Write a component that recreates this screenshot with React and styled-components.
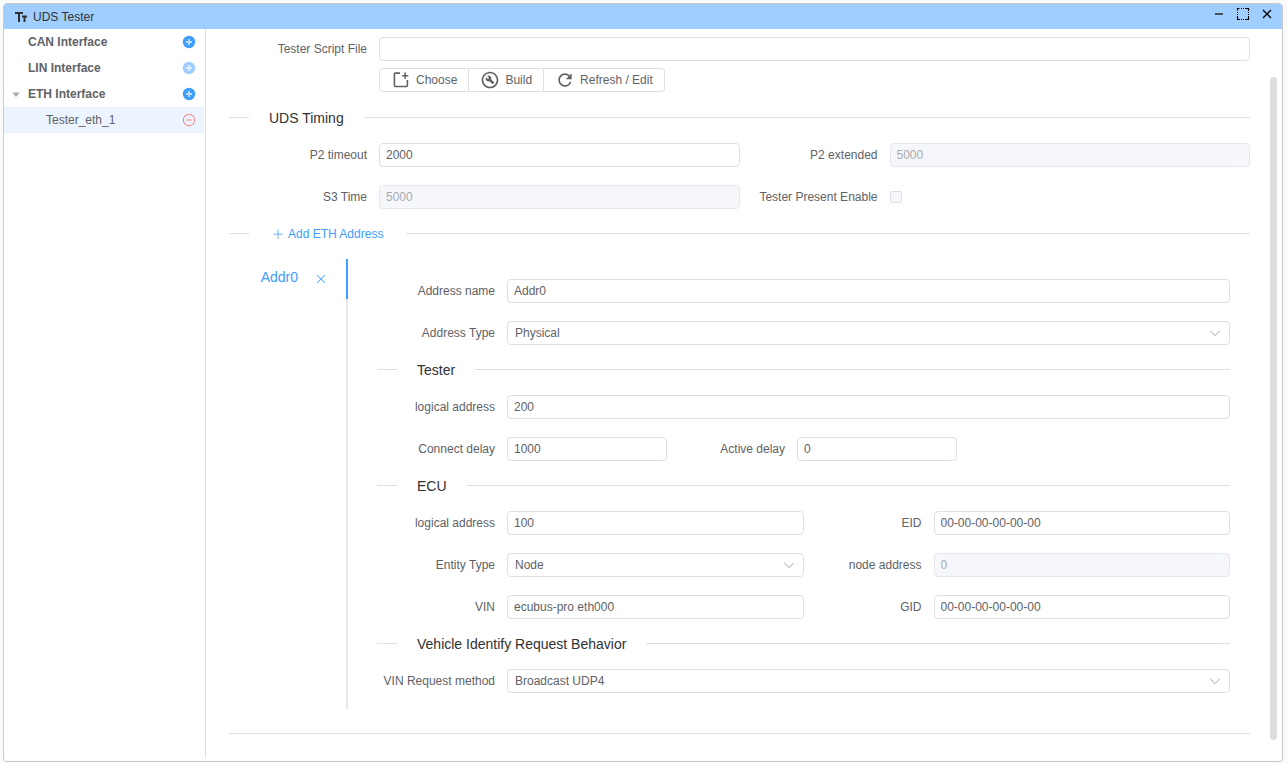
import { useState } from 'react'
import styled, { createGlobalStyle } from 'styled-components'
import { MdOutlineBuildCircle, MdRefresh } from 'react-icons/md'

const line_color = '#dcdfe6'
const text_color = '#606266'
const primary_color = '#409eff'

const ETH_TREE = [
    { name: 'CAN Interface', canAdd: true },
    { name: 'LIN Interface', canAdd: false },
    { name: 'ETH Interface', canAdd: true, children: ['Tester_eth_1'] },
]

//------------------Icons------------------

const TextSize = () => (
    <svg width="14" height="14" viewBox="0 0 14 14" fill="none" stroke="currentColor" strokeWidth="2" aria-hidden="true">
        <path d="M1 3h8M5 3v9M8 6.5h5M10.5 6.5V12" />
    </svg>
)

const PlusCircle = () => (
    <svg width="14" height="14" viewBox="0 0 14 14" aria-hidden="true">
        <circle cx="7" cy="7" r="6.2" fill="currentColor" />
        <path d="M7 4v6M4 7h6" stroke="#fff" strokeOpacity="0.65" strokeWidth="1.8" />
    </svg>
)

const MinusCircle = () => (
    <svg width="14" height="14" viewBox="0 0 1024 1024" fill="currentColor" aria-hidden="true">
        <path d="M352 480h320a32 32 0 1 1 0 64H352a32 32 0 0 1 0-64z" />
        <path d="M512 896a384 384 0 1 0 0-768 384 384 0 0 0 0 768zm0 64a448 448 0 1 1 0-896 448 448 0 0 1 0 896z" />
    </svg>
)

const Caret = () => (
    <svg width="12" height="12" viewBox="0 0 1024 1024" fill="#a8abb2" aria-hidden="true">
        <path d="M192 384h640L512 768z" />
    </svg>
)

const Plus = () => (
    <svg width="12" height="12" viewBox="0 0 1024 1024" fill="currentColor" aria-hidden="true">
        <path d="M480 480V128a32 32 0 0 1 64 0v352h352a32 32 0 1 1 0 64H544v352a32 32 0 1 1-64 0V544H128a32 32 0 0 1 0-64z" />
    </svg>
)

const Cross = () => (
    <svg width="14" height="14" viewBox="0 0 1024 1024" fill="currentColor" aria-hidden="true">
        <path d="M764.288 214.592 512 466.88 259.712 214.592a31.936 31.936 0 0 0-45.12 45.12L466.752 512 214.528 764.224a31.936 31.936 0 1 0 45.12 45.184L512 557.184l252.288 252.288a31.936 31.936 0 0 0 45.12-45.12L557.12 512.064l252.288-252.352a31.936 31.936 0 1 0-45.12-45.184z" />
    </svg>
)

const ChevronDown = () => (
    <svg width="14" height="14" viewBox="0 0 1024 1024" fill="#a8abb2" aria-hidden="true">
        <path d="M831.872 340.864 512 652.672 192.128 340.864a30.592 30.592 0 0 0-42.752 0 29.12 29.12 0 0 0 0 41.6L489.664 714.24a32 32 0 0 0 44.672 0l340.288-331.712a29.12 29.12 0 0 0 0-41.728 30.592 30.592 0 0 0-42.752 0z" />
    </svg>
)

const NewFile = () => (
    <svg width="20" height="20" viewBox="-1 -1 20 20" fill="none" stroke="currentColor" strokeWidth="1.6" aria-hidden="true">
        <path d="M8 2.1H3.4a1 1 0 0 0-1 1v11.4a1 1 0 0 0 1 1h11a1 1 0 0 0 1-1V9M13.2 1.6v6.2M10.1 4.7h6.2" />
    </svg>
)

const Minimize = () => (
    <svg width="14" height="14" viewBox="0 0 14 14" aria-hidden="true">
        <path d="M3 7h8" stroke="#303133" strokeOpacity="0.8" strokeWidth="2" />
    </svg>
)

const Maximize = () => (
    <svg width="14" height="14" viewBox="0 0 14 14" fill="none" stroke="currentColor" aria-hidden="true">
        <path d="M1.5 3.5v-2h2M10 1.5h2.5V4M12.5 10v2.5H10M4 12.5H1.5V10" strokeWidth="1.2" />
        <path d="M5 1.5h5M5 12.5h5M1.5 5v5M12.5 5v5" strokeDasharray="1 1" />
    </svg>
)

const CloseWindow = () => (
    <svg width="14" height="14" viewBox="0 0 14 14" aria-hidden="true">
        <path d="M3 3l8 8M11 3l-8 8" stroke="currentColor" strokeWidth="1.3" />
    </svg>
)

//------------------Form parts------------------

function TextField({ id, label, value = '', disabled, width, labelWidth }) {
    const [text, setText] = useState(value)
    return (
        <Field>
            <Label htmlFor={id} $width={labelWidth}>{label}</Label>
            <TextInput
                id={id}
                type="text"
                value={text}
                disabled={disabled}
                $width={width}
                onChange={(e) => setText(e.target.value)}
            />
        </Field>
    )
}

function SelectField({ id, label, options }) {
    const [selected, setSelected] = useState(options[0])
    return (
        <Field>
            <Label htmlFor={id}>{label}</Label>
            <SelectBox>
                <Select id={id} value={selected} onChange={(e) => setSelected(e.target.value)}>
                    {options.map((option) => <option key={option}>{option}</option>)}
                </Select>
                <ChevronDown />
            </SelectBox>
        </Field>
    )
}

function Divider({ title, children }) {
    return (
        <DividerRow>
            {title && <DividerTitle>{title}</DividerTitle>}
            {children}
        </DividerRow>
    )
}

function Sidebar() {
    const [selected, setSelected] = useState('Tester_eth_1')
    return (
        <SidebarPanel>
            {ETH_TREE.map(({ name, canAdd, children = [] }) => (
                <div key={name}>
                    <TreeRow>
                        <CaretSlot>{children.length > 0 && <Caret />}</CaretSlot>
                        <GroupName>{name}</GroupName>
                        <IconButton aria-label={`Add to ${name}`} disabled={!canAdd}><PlusCircle /></IconButton>
                    </TreeRow>
                    {children.map((child) => (
                        <TreeRow key={child} $active={child === selected} onClick={() => setSelected(child)}>
                            <ChildName>{child}</ChildName>
                            <IconButton $danger aria-label={`Remove ${child}`}><MinusCircle /></IconButton>
                        </TreeRow>
                    ))}
                </div>
            ))}
        </SidebarPanel>
    )
}

function AddressForm() {
    return (
        <AddressPanel>
            <Rows>
                <TextField id="addr-name" label="Address name" value="Addr0" />
                <SelectField id="addr-type" label="Address Type" options={['Physical', 'Functional']} />
            </Rows>
            <Divider title="Tester" />
            <Rows>
                <TextField id="tester-logical" label="logical address" value="200" />
                <InlineFields>
                    <TextField id="connect-delay" label="Connect delay" value="1000" width="160px" />
                    <TextField id="active-delay" label="Active delay" value="0" width="160px" />
                </InlineFields>
            </Rows>
            <Divider title="ECU" />
            <TwoColumns>
                <TextField id="ecu-logical" label="logical address" value="100" />
                <TextField id="eid" label="EID" value="00-00-00-00-00-00" />
                <SelectField id="entity-type" label="Entity Type" options={['Node', 'Gateway']} />
                <TextField id="node-address" label="node address" value="0" disabled />
                <TextField id="vin" label="VIN" value="ecubus-pro eth000" />
                <TextField id="gid" label="GID" value="00-00-00-00-00-00" />
            </TwoColumns>
            <Divider title="Vehicle Identify Request Behavior" />
            <SelectField id="vin-method" label="VIN Request method" options={['Broadcast UDP4', 'Unicast']} />
        </AddressPanel>
    )
}

export default function App() {
    return (
        <Page>
            <GlobalStyle />
            <Window>
                <TitleBar>
                    <TextSize />
                    <Title>UDS Tester</Title>
                    <WindowButton aria-label="Minimize"><Minimize /></WindowButton>
                    <WindowButton aria-label="Maximize"><Maximize /></WindowButton>
                    <WindowButton aria-label="Close"><CloseWindow /></WindowButton>
                </TitleBar>
                <Body>
                    <Sidebar />
                    <Main>
                        <ScriptBlock>
                            <TextField id="script" label="Tester Script File" labelWidth="150px" />
                            <ButtonGroup>
                                <ToolButton><NewFile />Choose</ToolButton>
                                <ToolButton><MdOutlineBuildCircle size={20} />Build</ToolButton>
                                <ToolButton><MdRefresh size={20} />Refresh / Edit</ToolButton>
                            </ButtonGroup>
                        </ScriptBlock>
                        <Divider title="UDS Timing" />
                        <TwoColumns>
                            <TextField id="p2" label="P2 timeout" value="2000" labelWidth="150px" />
                            <TextField id="p2-ext" label="P2 extended" value="5000" labelWidth="150px" disabled />
                            <TextField id="s3" label="S3 Time" value="5000" labelWidth="150px" disabled />
                            <Field>
                                <Label htmlFor="present" $width="150px">Tester Present Enable</Label>
                                <Checkbox id="present" type="checkbox" disabled />
                            </Field>
                        </TwoColumns>
                        <Divider>
                            <DividerAction><Plus />Add ETH Address</DividerAction>
                        </Divider>
                        <Tabs>
                            <TabNav>
                                <Tab>
                                    <TabName>Addr0</TabName>
                                    <TabClose aria-label="Close Addr0"><Cross /></TabClose>
                                </Tab>
                            </TabNav>
                            <AddressForm />
                        </Tabs>
                        <Divider />
                    </Main>
                    <ScrollTrack><ScrollThumb /></ScrollTrack>
                </Body>
            </Window>
        </Page>
    )
}


//------------------Styles------------------

const GlobalStyle = createGlobalStyle`
* {
  box-sizing: border-box;
}

body {
  margin: 0;
  background: #fafafa;
  color: ${text_color};
  font-family: 'Liberation Sans', Arial, sans-serif;
  font-size: 12px;
}

button, input, select {
  font: inherit;
  color: inherit;
}

button {
  border: 0;
  padding: 0;
  background: none;
  cursor: pointer;
}

svg {
  flex-shrink: 0;
}
`

const Page = styled.div`
  display: flex;
  min-height: 100vh;
  padding: 3px 4px 1px 3px;
`

const Window = styled.div`
  flex: 1;
  display: flex;
  flex-direction: column;
  min-width: 0;
  border: 1px solid #c8c9cc;
  border-radius: 4px;
  background: #fff;
  overflow: hidden;
`

const TitleBar = styled.header`
  display: flex;
  align-items: center;
  height: 25px;
  padding: 0 6px 0 10px;
  gap: 5px;
  background: #a0cfff;
  color: #303133;
`

const Title = styled.h1`
  flex: 1;
  margin: 0;
  font-size: 12px;
  font-weight: 400;
`

const WindowButton = styled.button`
  display: flex;
  align-items: center;
  justify-content: center;
  width: 19px;
  height: 20px;
  padding-bottom: 6px;
  color: #000;
`

const Body = styled.div`
  flex: 1;
  display: flex;
  position: relative;
`

const SidebarPanel = styled.nav`
  width: 202px;
  flex-shrink: 0;
  margin-bottom: 3px;
  padding-right: 1px;
  border-right: 1px solid ${line_color};
`

const TreeRow = styled.div`
  display: flex;
  align-items: center;
  height: 26px;
  padding-right: 8px;
  background: ${({ $active }) => $active ? '#ecf5ff' : 'transparent'};
`

const CaretSlot = styled.span`
  display: flex;
  width: 24px;
  padding-left: 6px;
`

const GroupName = styled.span`
  flex: 1;
  font-weight: 700;
`

const ChildName = styled.span`
  flex: 1;
  padding-left: 42px;
`

const IconButton = styled.button`
  display: flex;
  color: ${({ $danger }) => $danger ? '#f56c6c' : primary_color};

  &:disabled {
    color: #a0cfff;
  }
`

const Main = styled.main`
  flex: 1;
  min-width: 0;
  padding: 8px 32px 0 23px;
`

const Rows = styled.div`
  display: flex;
  flex-direction: column;
  gap: 18px;
`

const TwoColumns = styled.div`
  display: grid;
  grid-template-columns: 1fr 1fr;
  row-gap: 18px;
`

const InlineFields = styled.div`
  display: flex;
`

const Field = styled.div`
  display: flex;
  align-items: center;
  min-width: 0;
  height: 24px;
`

const Label = styled.label`
  flex-shrink: 0;
  width: ${({ $width }) => $width || '130px'};
  padding-right: 12px;
  text-align: right;
  white-space: nowrap;
`

const TextInput = styled.input`
  flex: ${({ $width }) => $width ? 'none' : '1'};
  width: ${({ $width }) => $width || 'auto'};
  min-width: 0;
  height: 24px;
  padding: 0 6px;
  border: 1px solid ${line_color};
  border-radius: 4px;
  background: #fff;

  &:disabled {
    border-color: #e4e7ed;
    background: #f5f7fa;
    color: #a8abb2;
  }
`

const SelectBox = styled.div`
  flex: 1;
  position: relative;
  min-width: 0;

  svg {
    position: absolute;
    top: 5px;
    right: 8px;
    pointer-events: none;
  }
`

const Select = styled.select`
  display: block;
  appearance: none;
  width: 100%;
  height: 24px;
  padding: 0 7px;
  border: 1px solid ${line_color};
  border-radius: 4px;
  background: #fff;
`

const Checkbox = styled.input`
  appearance: none;
  width: 12px;
  height: 12px;
  margin: 0;
  border: 1px solid ${line_color};
  border-radius: 2px;
  background: #f5f7fa;
`

const ScriptBlock = styled.div`
  display: flex;
  flex-direction: column;
  gap: 7px;
  padding-bottom: 1px;
`

const ButtonGroup = styled.div`
  display: flex;
  margin-left: 150px;
`

const ToolButton = styled.button`
  display: flex;
  align-items: center;
  height: 24px;
  gap: 5px;
  padding: 0 11px;
  border: 1px solid ${line_color};

  & + & {
    border-left: 0;
  }

  &:first-child {
    border-radius: 4px 0 0 4px;
  }

  &:last-child {
    border-radius: 0 4px 4px 0;
  }
`

const DividerRow = styled.div`
  display: flex;
  align-items: center;
  height: 1px;
  margin: 24px 0 25px;

  &::before,
  &::after {
    content: '';
    height: 1px;
    background: ${line_color};
  }

  &::before {
    width: 20px;
  }

  &::after {
    flex: 1;
  }
`

const DividerTitle = styled.h2`
  margin: 0;
  padding: 0 20px;
  color: #303133;
  font-size: 14px;
  font-weight: 400;
`

const DividerAction = styled.button`
  display: flex;
  align-items: center;
  gap: 4px;
  padding: 0 23px;
  color: ${primary_color};
`

const Tabs = styled.div`
  display: flex;
`

const TabNav = styled.div`
  width: 119px;
  flex-shrink: 0;
  border-right: 2px solid #e4e7ed;
`

const Tab = styled.div`
  display: flex;
  align-items: center;
  justify-content: flex-end;
  height: 40px;
  gap: 16px;
  margin-right: -2px;
  padding-right: 18px;
  border-right: 2px solid ${primary_color};
  color: ${primary_color};
`

const TabName = styled.span`
  padding-bottom: 4px;
  font-size: 14px;
`

const TabClose = styled.button`
  display: flex;
`

const AddressPanel = styled.section`
  flex: 1;
  min-width: 0;
  padding: 20px 20px 16px 29px;
`

const ScrollTrack = styled.div`
  position: absolute;
  top: 48px;
  right: 5px;
  bottom: 21px;
  width: 7px;
`

const ScrollThumb = styled.div`
  height: 100%;
  border-radius: 4px;
  background: #dddee0;
`
